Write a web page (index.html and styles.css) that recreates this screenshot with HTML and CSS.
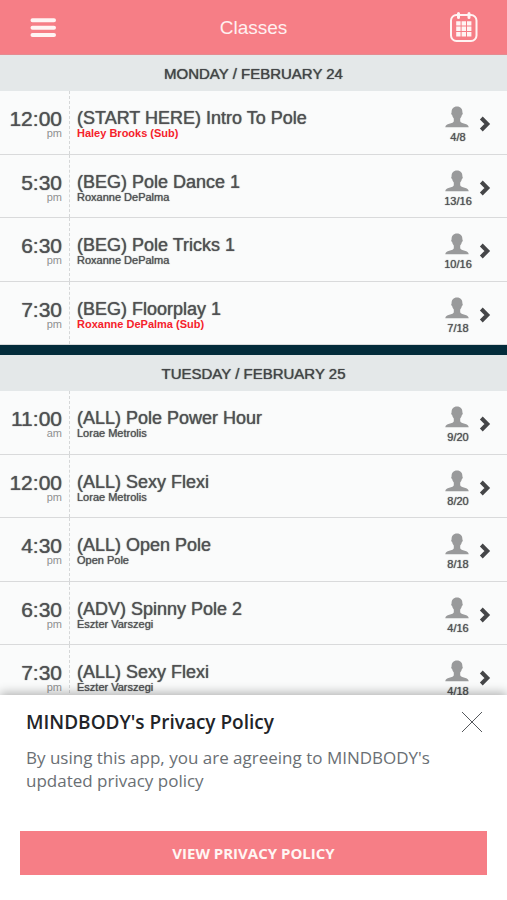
FILE: index.html
```html
<!DOCTYPE html>
<html lang="en">
<head>
<meta charset="utf-8">
<meta name="viewport" content="width=device-width, initial-scale=1">
<title>Classes</title>
<link rel="stylesheet" href="styles.css">
</head>
<body>
<svg class="sprite" aria-hidden="true">
  <symbol id="person" viewBox="0 0 24 22">
    <path d="M12 0.5c3.600 0 5.600 2.500 5.400 6 .6.3.5 2-.5 2.500-.3 1.500-.9 2.600-1.700 3.500v2.700c.3 1.600 3.300 2 5.300 2.800 2.100.8 2.900 1.500 3.200 3.200H.3c.3-1.700 1.100-2.400 3.200-3.200 2-.8 5-1.200 5.300-2.800v-2.700c-.8-.9-1.400-2-1.700-3.500-1-.5-1.100-2.200-.5-2.500-.2-3.500 1.800-6 5.400-6z"/>
  </symbol>
  <symbol id="chevron" viewBox="0 0 12 16">
    <path d="M2.300 2 8.300 8l-6 6"/>
  </symbol>
</svg>
<div class="app">
  <header class="topbar">
    <button class="icon-button" type="button" aria-label="Menu">
      <svg class="menu-icon" viewBox="0 0 26 20"><path d="M2.500 3.300h21.500M2.500 10.700h21.500M2.500 18h21.500"/></svg>
    </button>
    <h1 class="topbar-title">Classes</h1>
    <button class="icon-button" type="button" aria-label="Calendar">
      <svg class="calendar-icon" viewBox="0 0 30 32">
        <rect x="2" y="4" width="25.500" height="26" rx="5.500"/>
        <path class="rings" d="M9.500 2.500v4M20 2.500v4"/>
        <path class="days" d="M7.200 10.200h4.400v4.400H7.200zM12.600 10.200h4.400v4.400h-4.400zM18 10.200h4.400v4.400h-4.400zM7.200 15.600h4.400v4.400H7.200zM12.600 15.600h4.400v4.400h-4.400zM18 15.600h4.400v4.400h-4.400zM7.200 21h4.400v4.400H7.200zM12.600 21h4.400v4.400h-4.400zM18 21h4.400v4.400h-4.400z"/>
      </svg>
    </button>
  </header>

  <main class="schedule">
    <section class="day">
      <h2 class="day-title">MONDAY / FEBRUARY 24</h2>
      <ul class="class-list">
        <li class="class-row"><div class="time">12:00<small>pm</small></div><div class="info"><h3>(START HERE) Intro To Pole</h3><p class="sub">Haley Brooks (Sub)</p></div><div class="spots"><svg><use href="#person"/></svg>4/8</div><svg class="chevron"><use href="#chevron"/></svg></li>
        <li class="class-row"><div class="time">5:30<small>pm</small></div><div class="info"><h3>(BEG) Pole Dance 1</h3><p>Roxanne DePalma</p></div><div class="spots"><svg><use href="#person"/></svg>13/16</div><svg class="chevron"><use href="#chevron"/></svg></li>
        <li class="class-row"><div class="time">6:30<small>pm</small></div><div class="info"><h3>(BEG) Pole Tricks 1</h3><p>Roxanne DePalma</p></div><div class="spots"><svg><use href="#person"/></svg>10/16</div><svg class="chevron"><use href="#chevron"/></svg></li>
        <li class="class-row"><div class="time">7:30<small>pm</small></div><div class="info"><h3>(BEG) Floorplay 1</h3><p class="sub">Roxanne DePalma (Sub)</p></div><div class="spots"><svg><use href="#person"/></svg>7/18</div><svg class="chevron"><use href="#chevron"/></svg></li>
      </ul>
    </section>
    <section class="day">
      <h2 class="day-title">TUESDAY / FEBRUARY 25</h2>
      <ul class="class-list">
        <li class="class-row"><div class="time">11:00<small>am</small></div><div class="info"><h3>(ALL) Pole Power Hour</h3><p>Lorae Metrolis</p></div><div class="spots"><svg><use href="#person"/></svg>9/20</div><svg class="chevron"><use href="#chevron"/></svg></li>
        <li class="class-row"><div class="time">12:00<small>pm</small></div><div class="info"><h3>(ALL) Sexy Flexi</h3><p>Lorae Metrolis</p></div><div class="spots"><svg><use href="#person"/></svg>8/20</div><svg class="chevron"><use href="#chevron"/></svg></li>
        <li class="class-row"><div class="time">4:30<small>pm</small></div><div class="info"><h3>(ALL) Open Pole</h3><p>Open Pole</p></div><div class="spots"><svg><use href="#person"/></svg>8/18</div><svg class="chevron"><use href="#chevron"/></svg></li>
        <li class="class-row"><div class="time">6:30<small>pm</small></div><div class="info"><h3>(ADV) Spinny Pole 2</h3><p>Eszter Varszegi</p></div><div class="spots"><svg><use href="#person"/></svg>4/16</div><svg class="chevron"><use href="#chevron"/></svg></li>
        <li class="class-row"><div class="time">7:30<small>pm</small></div><div class="info"><h3>(ALL) Sexy Flexi</h3><p>Eszter Varszegi</p></div><div class="spots"><svg><use href="#person"/></svg>4/18</div><svg class="chevron"><use href="#chevron"/></svg></li>
      </ul>
    </section>
  </main>

  <aside class="notice">
    <div class="notice-head">
      <h2>MINDBODY's Privacy Policy</h2>
      <button class="close" type="button" aria-label="Close">
        <svg viewBox="0 0 22 22"><path d="M1 1l20 20M21 1 1 21"/></svg>
      </button>
    </div>
    <p>By using this app, you are agreeing to MINDBODY's updated privacy policy</p>
    <button class="view-policy" type="button">VIEW PRIVACY POLICY</button>
  </aside>
</div>
</body>
</html>
```
FILE: styles.css
```css
* {
  box-sizing: border-box;
}

body,
h1,
h2,
h3,
p,
ul {
  margin: 0;
  padding: 0;
}

body {
  font-family: "Liberation Sans", Arial, sans-serif;
  color: #505153;
}

button {
  border: 0;
  padding: 0;
  background: none;
  cursor: pointer;
}

svg {
  display: block;
}

.sprite {
  display: none;
}

.app {
  display: flex;
  flex-direction: column;
  height: 100vh;
  background: #032c3b;
}

.topbar {
  display: flex;
  flex: none;
  align-items: center;
  justify-content: space-between;
  height: 55px;
  padding: 0 28px;
  background: #f67e86;
  border-bottom: 1px solid #e58a90;
}

.topbar-title {
  padding-top: 2px;
  font-size: 19px;
  font-weight: 400;
  line-height: 24px;
  color: #fff0f0;
}

.icon-button {
  display: flex;
  justify-content: center;
  width: 30px;
}

.menu-icon {
  width: 26px;
  height: 20px;
  overflow: visible;
  fill: none;
  stroke: #fff4f3;
  stroke-width: 4;
  stroke-linecap: round;
}

.calendar-icon {
  width: 30px;
  height: 32px;
  fill: none;
  stroke: #fff4f3;
  stroke-width: 2;
}

.calendar-icon .rings {
  stroke-width: 3;
  stroke-linecap: round;
}

.calendar-icon .days {
  fill: #fff4f3;
  stroke: none;
}

.schedule {
  display: flex;
  flex: 1;
  flex-direction: column;
  gap: 10px;
  min-height: 0;
  overflow: hidden;
}

.day {
  flex: none;
}

/* A tight shadow in the text colour gives the medium weight. */
.day-title,
.time,
.info,
.spots {
  text-shadow: 0 0 1px currentColor;
}

.day-title {
  height: 36px;
  font-size: 15px;
  font-weight: 400;
  line-height: 37px;
  text-align: center;
  color: #434547;
  background: #e4e8e9;
}

.class-list {
  list-style: none;
}

.class-row {
  display: flex;
  height: 64px;
  background: #fafbfb;
  border-bottom: 1px solid #d9dadb;
}

.class-row:nth-child(even) {
  height: 63px;
}

.time {
  flex: none;
  width: 70px;
  padding: 18px 7px 0 0;
  border-right: 1px dashed #d5d7d8;
  font-size: 21px;
  line-height: 20px;
  text-align: right;
}

.time small {
  display: block;
  font-size: 11px;
  line-height: 9px;
  text-shadow: none;
  color: #8f9192;
}

.info {
  flex: 1;
  min-width: 0;
  padding: 17px 0 0 7px;
}

.info h3 {
  font-size: 18px;
  font-weight: 400;
  line-height: 20px;
}

.info p {
  font-size: 11px;
  line-height: 11px;
}

.info .sub {
  font-weight: 700;
  text-shadow: none;
  color: #f5222b;
}

.spots {
  flex: none;
  width: 40px;
  padding-top: 15px;
  font-size: 11px;
  line-height: 14px;
  text-align: center;
}

.spots svg {
  width: 24px;
  height: 22px;
  margin: 0 auto 2px 7px;
  fill: #999a9b;
}

.chevron {
  flex: none;
  width: 12px;
  height: 16px;
  margin: 25px 16px 0 1px;
  fill: none;
  stroke: #454648;
  stroke-width: 4;
}

.notice {
  position: relative;
  flex: none;
  padding: 12px 20px 25px;
  font-family: "Open Sans", sans-serif;
  background: #fff;
  box-shadow: 0 -2px 10px rgba(0, 0, 0, 0.3);
}

.notice-head {
  display: flex;
  align-items: center;
  justify-content: space-between;
  padding: 0 4px 0 6px;
}

.notice h2 {
  font-size: 19px;
  font-weight: 600;
  line-height: 30px;
  color: #222428;
}

.close svg {
  width: 22px;
  height: 22px;
  fill: none;
  stroke: #55585c;
  stroke-width: 1;
}

.notice p {
  padding: 9px 6px 0;
  font-size: 17px;
  line-height: 23px;
  color: #6a6f74;
}

.view-policy {
  display: block;
  width: 100%;
  height: 44px;
  margin-top: 39px;
  font-family: inherit;
  font-size: 15px;
  font-weight: 700;
  color: #fff6f4;
  background: #f67e86;
}
```
